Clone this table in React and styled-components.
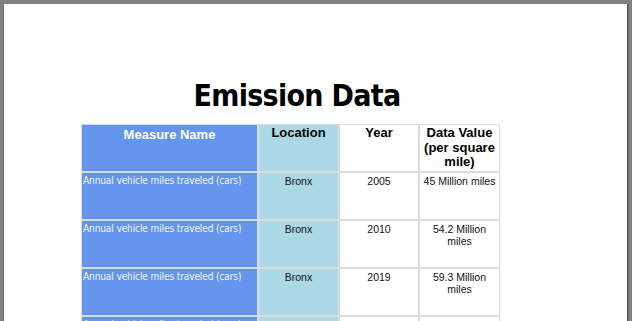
import React from "react";
import styled, { createGlobalStyle } from "styled-components";

const Global = createGlobalStyle`
  html, body { margin: 0; padding: 0; background: #808080; }
  body { width: 632px; height: 321px; overflow: hidden; }
`;

const Page = styled.div`
  margin: 4px 0 0 3px;
  width: 624px;
  height: 330px;
  background: #fff;
  border-left: 1px solid #6e6e6e;
  box-shadow: 1px 0 0 #555, 2px 0 0 #6a6a6a;
  box-sizing: border-box;
  padding-top: 74px;
`;

const Title = styled.h1`
  margin: 0 0 10px 0;
  width: 586px;
  text-align: center;
  font-family: "DejaVu Sans Condensed", "DejaVu Sans", sans-serif;
  font-stretch: condensed;
  font-weight: bold;
  font-size: 30px;
  line-height: 36px;
  letter-spacing: -0.7px;
  color: #000;
`;

const Table = styled.table`
  margin-left: 77px;
  border-collapse: separate;
  border-spacing: 0;
  table-layout: fixed;
  width: 419px;
`;

const Col = styled.col`
  width: ${(p) => p.$w}px;
`;

const tone = (t) => (t === "blue" ? "#6495ed" : t === "light" ? "#add8e6" : "#fff");

const Th = styled.th`
  height: 48px;
  padding: ${(p) => (p.$tone === "blue" ? "3px" : "1px")} 2px 0 2px;
  box-sizing: border-box;
  vertical-align: top;
  text-align: center;
  font-family: "Liberation Sans", Arial, sans-serif;
  font-weight: bold;
  font-size: 13px;
  line-height: 14.5px;
  color: ${(p) => (p.$tone === "blue" ? "#fff" : "#000")};
  background: ${(p) => tone(p.$tone)};
  border: 1px solid #dcdcdc;
`;

const Td = styled.td`
  height: 48px;
  padding: 2px 2px 0 2px;
  box-sizing: border-box;
  vertical-align: top;
  text-align: center;
  font-family: "Liberation Sans", Arial, sans-serif;
  font-size: 10.5px;
  line-height: 12px;
  color: #111;
  background: ${(p) => tone(p.$tone)};
  border: 1px solid #dcdcdc;
`;

const NameCell = styled(Td)`
  text-align: left;
  padding-left: 1px;
  font-family: "DejaVu Sans Condensed", "DejaVu Sans", sans-serif;
  font-stretch: condensed;
  font-size: 10px;
  letter-spacing: -0.1px;
  color: #f4f6ff;
`;

const rows = [
  { year: "2005", value: "45 Million miles" },
  { year: "2010", value: "54.2 Million miles" },
  { year: "2019", value: "59.3 Million miles" },
  { year: "2022", value: "60.1 Million miles" },
];

export default function App() {
  return (
    <>
      <Global />
      <Page>
        <Title>Emission Data</Title>
        <Table>
          <colgroup>
            <Col $w={177} />
            <Col $w={81} />
            <Col $w={80} />
            <Col $w={81} />
          </colgroup>
          <thead>
            <tr>
              <Th $tone="blue">Measure Name</Th>
              <Th $tone="light">Location</Th>
              <Th>Year</Th>
              <Th>Data Value (per square mile)</Th>
            </tr>
          </thead>
          <tbody>
            {rows.map((r, i) => (
              <tr key={i}>
                <NameCell $tone="blue">Annual vehicle miles traveled (cars)</NameCell>
                <Td $tone="light">Bronx</Td>
                <Td>{r.year}</Td>
                <Td>{r.value}</Td>
              </tr>
            ))}
          </tbody>
        </Table>
      </Page>
    </>
  );
}
